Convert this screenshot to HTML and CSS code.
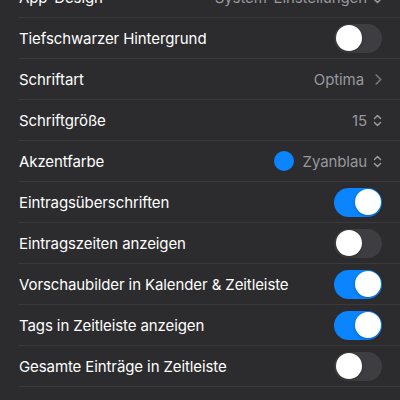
FILE: index.html
```html
<!DOCTYPE html>
<html lang="de">
<head>
<meta charset="utf-8">
<link rel="stylesheet" href="styles.css">
</head>
<body>
<div class="list">
  <div class="row"><span class="label">App-Design</span><span class="value">System-Einstellungen <svg class="updown" viewBox="0 0 8 13"><path d="M1 4.5L4 1.5L7 4.5M1 8.5L4 11.5L7 8.5"/></svg></span></div>
  <div class="row"><span class="label">Tiefschwarzer Hintergrund</span><span class="toggle"><span class="knob"></span></span></div>
  <div class="row"><span class="label">Schriftart</span><span class="value">Optima <svg class="chev" viewBox="0 0 7 11"><path d="M1.2 1L5.7 5.5L1.2 10"/></svg></span></div>
  <div class="row"><span class="label">Schriftgröße</span><span class="value">15 <svg class="updown" viewBox="0 0 8 13"><path d="M1 4.5L4 1.5L7 4.5M1 8.5L4 11.5L7 8.5"/></svg></span></div>
  <div class="row"><span class="label">Akzentfarbe</span><span class="value"><span class="dot"></span>Zyanblau <svg class="updown" viewBox="0 0 8 13"><path d="M1 4.5L4 1.5L7 4.5M1 8.5L4 11.5L7 8.5"/></svg></span></div>
  <div class="row"><span class="label">Eintragsüberschriften</span><span class="toggle on"><span class="knob"></span></span></div>
  <div class="row"><span class="label">Eintragszeiten anzeigen</span><span class="toggle"><span class="knob"></span></span></div>
  <div class="row"><span class="label">Vorschaubilder in Kalender &amp; Zeitleiste</span><span class="toggle on"><span class="knob"></span></span></div>
  <div class="row"><span class="label">Tags in Zeitleiste anzeigen</span><span class="toggle on"><span class="knob"></span></span></div>
  <div class="row"><span class="label">Gesamte Einträge in Zeitleiste</span><span class="toggle"><span class="knob"></span></span></div>
</div>
</body>
</html>
```
FILE: styles.css
```css
html, body {
  margin: 0;
  padding: 0;
  background: #2c2c2e;
  height: 400px;
  overflow: hidden;
}
body {
  font-family: Inter, "Noto Sans", "Liberation Sans", sans-serif;
  font-size: 15px;
  letter-spacing: -0.1px;
  color: #ffffff;
}
.list {
  margin-top: -23px;
}
.row {
  margin-left: 19px;
  padding-right: 18px;
  height: 40px;
  border-bottom: 1px solid #3a3a3d;
  display: flex;
  align-items: center;
  justify-content: space-between;
}
.label {
  white-space: nowrap;
}
.value {
  display: flex;
  align-items: center;
  color: #98989e;
  white-space: nowrap;
}
.updown {
  width: 9px;
  height: 13px;
  margin-left: 6px;
  fill: none;
  stroke: #98989e;
  stroke-width: 1.5;
  stroke-linecap: round;
  stroke-linejoin: round;
}
.chev {
  width: 7px;
  height: 11px;
  margin-left: 11px;
  fill: none;
  stroke: #7a7a7f;
  stroke-width: 1.6;
  stroke-linecap: round;
  stroke-linejoin: round;
}
.dot {
  width: 20px;
  height: 20px;
  border-radius: 50%;
  background: #0a84ff;
  margin-right: 9px;
}
.toggle {
  width: 48px;
  height: 29px;
  border-radius: 15px;
  background: #3e3e42;
  display: flex;
  align-items: center;
  padding: 0 1.5px;
  box-sizing: border-box;
}
.toggle.on {
  background: #0a84ff;
  justify-content: flex-end;
}
.knob {
  width: 26px;
  height: 26px;
  border-radius: 50%;
  background: #ffffff;
  box-shadow: 0 1px 3px rgba(0,0,0,0.25);
}
```
